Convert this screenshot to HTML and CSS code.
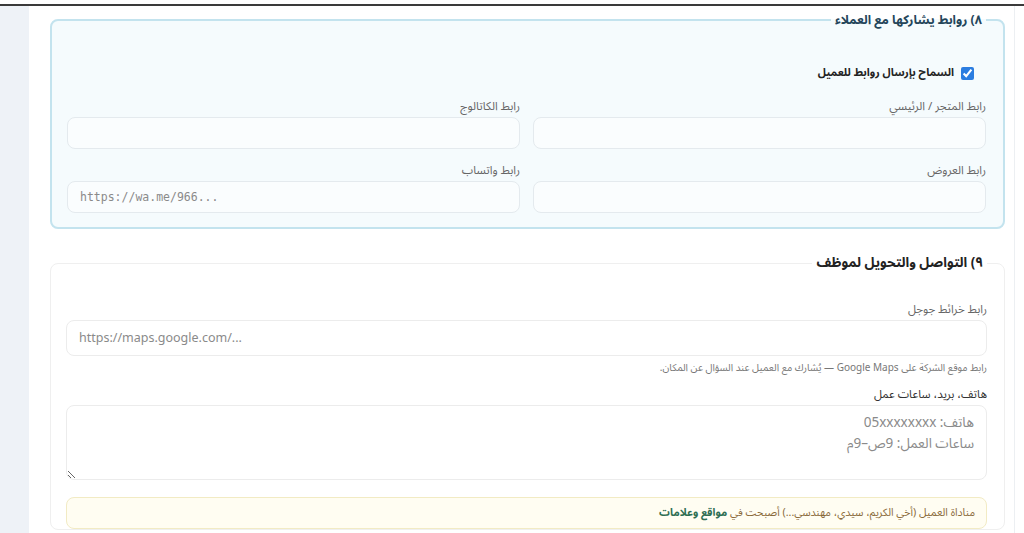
FILE: index.html
```html
<!DOCTYPE html>
<html lang="ar" dir="rtl">

<head>
    <meta charset="UTF-8">
    <title>إعدادات البوت</title>
    <link rel="stylesheet" href="styles.css">
</head>

<body>
    <div class="topbar"></div>

    <div class="shell">
        <div class="panel">

            <!-- ٨) الروابط -->
            <fieldset class="box box-links">
                <legend>٨) روابط يشاركها مع العملاء</legend>

                <label class="check-row">
                    <input type="checkbox" checked>
                    <span>السماح بإرسال روابط للعميل</span>
                </label>

                <div class="grid">
                    <div class="field">
                        <label>رابط المتجر / الرئيسي</label>
                        <input type="text">
                    </div>
                    <div class="field">
                        <label>رابط الكاتالوج</label>
                        <input type="text">
                    </div>
                    <div class="field">
                        <label>رابط العروض</label>
                        <input type="text">
                    </div>
                    <div class="field">
                        <label>رابط واتساب</label>
                        <input type="text" class="mono" dir="ltr" placeholder="https://wa.me/966...">
                    </div>
                </div>
            </fieldset>

            <!-- ٩) التواصل -->
            <fieldset class="box box-contact">
                <legend>٩) التواصل والتحويل لموظف</legend>

                <div class="field field-first">
                    <label>رابط خرائط جوجل</label>
                    <input type="text" class="tall" dir="ltr" placeholder="https://maps.google.com/...">
                    <small class="hint">رابط موقع الشركة على Google Maps — يُشارك مع العميل عند السؤال عن المكان.</small>
                </div>

                <div class="field">
                    <label class="dark">هاتف، بريد، ساعات عمل</label>
                    <textarea placeholder="هاتف: 05xxxxxxxx&#10;ساعات العمل: 9ص–9م"></textarea>
                </div>

                <div class="note">
                    مناداة العميل (أخي الكريم، سيدي، مهندسي...) أصبحت في <b>مواقع وعلامات</b>
                </div>
            </fieldset>

        </div>
    </div>
</body>

</html>
```

FILE: styles.css
```css
* {
    margin: 0;
    padding: 0;
    box-sizing: border-box;
}

body {
    font-family: "Noto Sans Arabic", "Noto Sans", "DejaVu Sans", sans-serif;
    background-color: #eef2f7;
    color: #333;
    height: 533px;
    overflow: hidden;
    line-height: 16px;
}

.topbar {
    height: 6px;
    background-color: #fff;
    border-bottom: 2px solid #3a3a3a;
}

.shell {
    padding: 0 9px 0 0;
    margin-left: 29px;
    height: 527px;
    background-color: #fff;
}

.panel {
    background-color: #fff;
    border-right: 1px solid #eceff2;
    height: 100%;
    padding: 5px 9px 0 21px;
}

.box {
    border-radius: 8px;
    padding: 0 17px 14px 15px;
}

.box legend {
    padding: 0 4px;
    font-weight: bold;
    line-height: 18px;
}

.box-links {
    border: 2px solid #c3e3ee;
    background-color: #f5fbfd;
}

.box-links legend {
    font-size: 12.5px;
    color: #24455a;
}

.box-contact {
    border: 1px solid #efefef;
    margin-top: 25px;
    padding-bottom: 0;
}

.box-contact legend {
    font-size: 13.5px;
    color: #222;
}

.check-row {
    display: flex;
    align-items: center;
    gap: 7px;
    margin-top: 36px;
    padding-right: 12px;
    font-size: 11px;
    font-weight: bold;
    color: #222;
}

.check-row input {
    width: 13px;
    height: 13px;
    accent-color: #2b7de0;
}

.grid {
    display: grid;
    grid-template-columns: 1fr 1fr;
    column-gap: 13px;
    row-gap: 13px;
    margin-top: 17px;
}

.field {
    display: flex;
    flex-direction: column;
}

.field label {
    font-size: 11.5px;
    color: #666;
    margin-bottom: 3px;
    line-height: 16px;
}

.field label.dark {
    color: #333;
}

.field input,
.field textarea {
    font-family: "Noto Sans Arabic", "Noto Sans", "DejaVu Sans", sans-serif;
    font-size: 13px;
    height: 32px;
    border: 1px solid #e4eaee;
    border-radius: 8px;
    background-color: #fafdfe;
    padding: 0 12px;
    color: #333;
    outline: none;
}

.field input::placeholder,
.field textarea::placeholder {
    color: #8a8a8a;
}

.field input.mono {
    font-family: "DejaVu Sans Mono", monospace;
    font-size: 11.5px;
    text-align: left;
}

.box-contact .field input,
.box-contact .field textarea {
    background-color: #fff;
    border-color: #ececec;
}

.field-first {
    margin-top: 29px;
}

.field input.tall {
    height: 36px;
    text-align: left;
    font-size: 12.5px;
}

.hint {
    font-size: 10px;
    line-height: 13px;
    color: #777;
    margin-top: 5px;
    margin-bottom: 12px;
}

.field textarea {
    height: 75px;
    padding: 6px 12px;
    font-size: 13.5px;
    line-height: 21px;
    resize: vertical;
}

.note {
    margin-top: 17px;
    background-color: #fffdf2;
    border: 1px solid #f2ebc4;
    border-radius: 8px;
    padding: 7px 11px;
    font-size: 10.7px;
    line-height: 16px;
    color: #8a6a3a;
}

.note b {
    color: #2e6e52;
}
```
